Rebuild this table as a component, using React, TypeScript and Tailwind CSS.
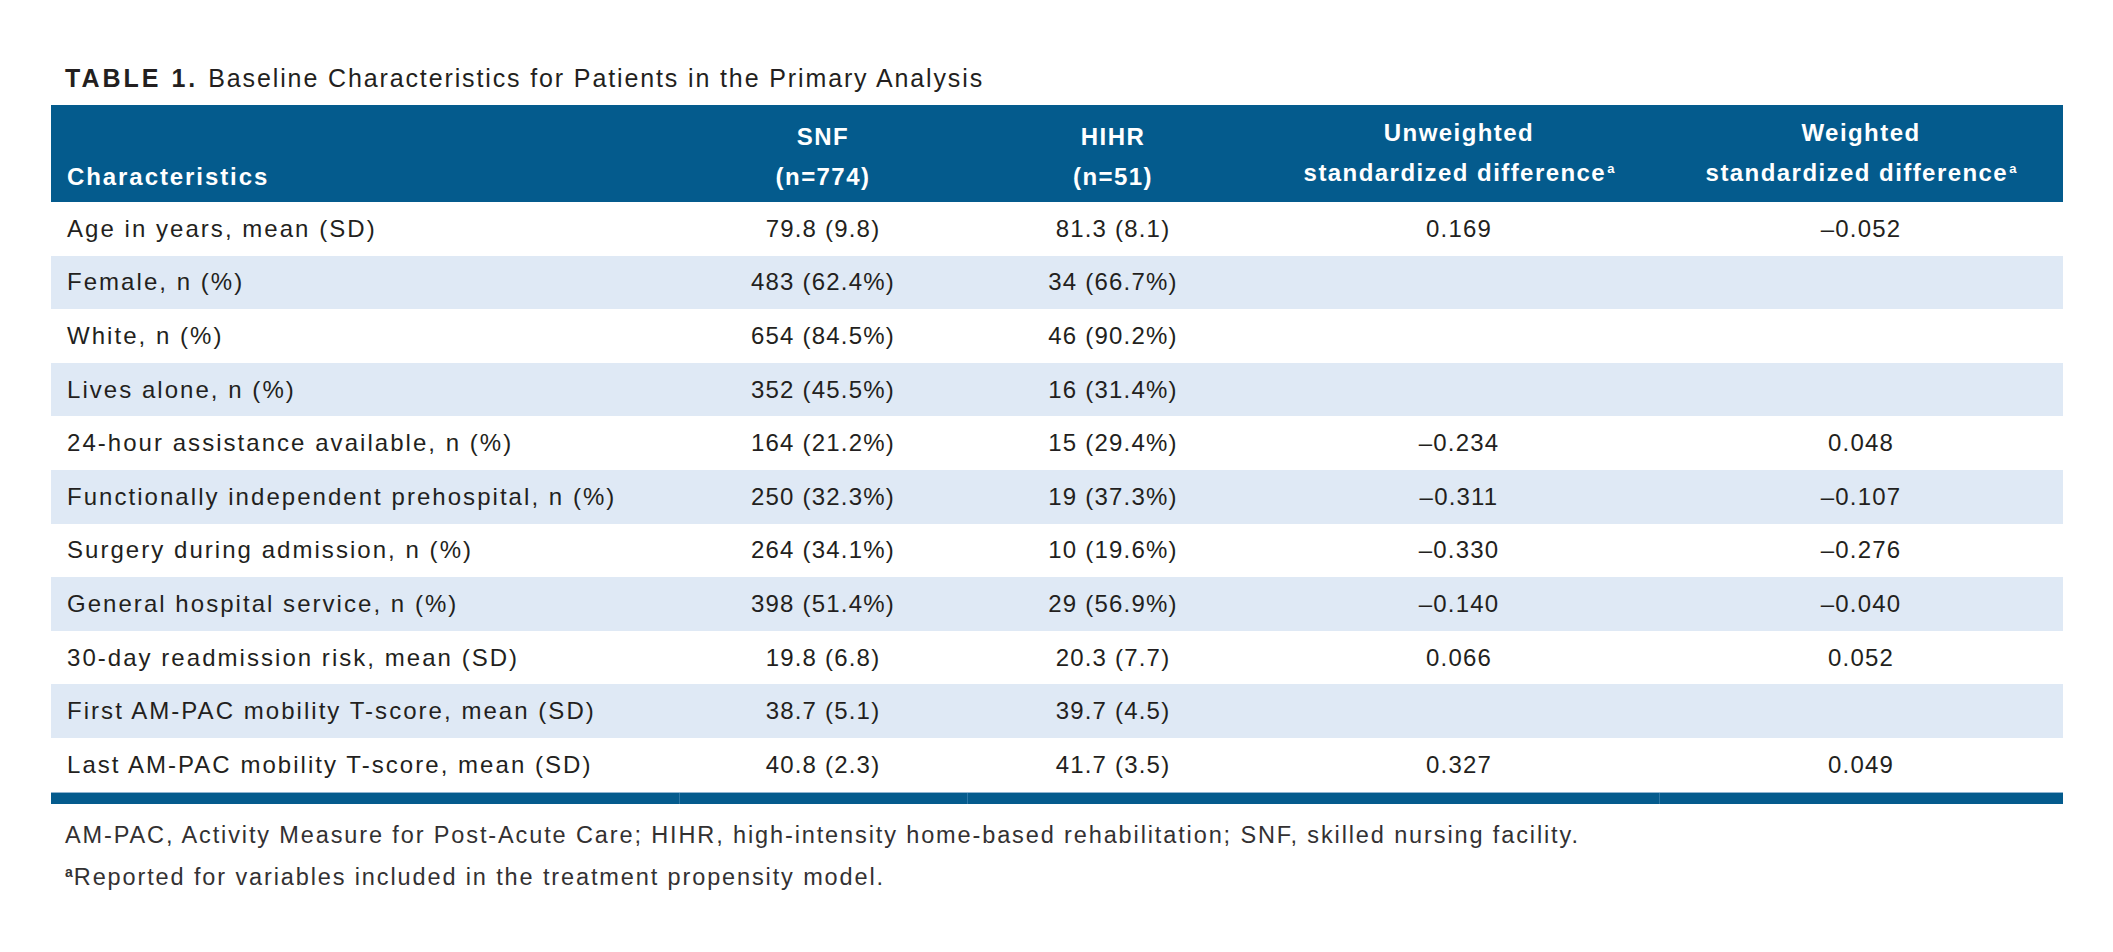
import React from "react";

const rows: [string, string, string, string, string][] = [
  ["Age in years, mean (SD)", "79.8 (9.8)", "81.3 (8.1)", "0.169", "–0.052"],
  ["Female, n (%)", "483 (62.4%)", "34 (66.7%)", "", ""],
  ["White, n (%)", "654 (84.5%)", "46 (90.2%)", "", ""],
  ["Lives alone, n (%)", "352 (45.5%)", "16 (31.4%)", "", ""],
  ["24-hour assistance available, n (%)", "164 (21.2%)", "15 (29.4%)", "–0.234", "0.048"],
  ["Functionally independent prehospital, n (%)", "250 (32.3%)", "19 (37.3%)", "–0.311", "–0.107"],
  ["Surgery during admission, n (%)", "264 (34.1%)", "10 (19.6%)", "–0.330", "–0.276"],
  ["General hospital service, n (%)", "398 (51.4%)", "29 (56.9%)", "–0.140", "–0.040"],
  ["30-day readmission risk, mean (SD)", "19.8 (6.8)", "20.3 (7.7)", "0.066", "0.052"],
  ["First AM-PAC mobility T-score, mean (SD)", "38.7 (5.1)", "39.7 (4.5)", "", ""],
  ["Last AM-PAC mobility T-score, mean (SD)", "40.8 (2.3)", "41.7 (3.5)", "0.327", "0.049"],
];

const cols = "grid grid-cols-[628px_288px_292px_400px_404px]";

function Sup() {
  return <span className="relative -top-[8px] ml-[1px] text-[13px] font-bold tracking-normal">a</span>;
}

export default function App() {
  return (
    <div className="h-[952px] w-[2113px] bg-white font-['Liberation_Sans',Arial,sans-serif] text-[#231f20]">
      <div className="pl-[51px]">
        {/* Title */}
        <div className="flex h-[105px] items-end pb-[12px] pl-[14px] text-[25px] leading-[30px] tracking-[0.075em]">
          <span className="mr-[10px] font-bold tracking-[0.12em]">TABLE 1.</span>
          <span>Baseline Characteristics for Patients in the Primary Analysis</span>
        </div>

        <div className="w-[2012px]">
          {/* Header */}
          <div className={`${cols} h-[97px] bg-[#045b8d] text-[24px] font-bold leading-[40px] tracking-[0.06em] text-white`}>
            <div className="flex items-end pb-[5px] pl-[16px] tracking-[0.08em]">Characteristics</div>
            <div className="flex flex-col items-center justify-end pb-[5px]">
              <span>SNF</span>
              <span>(n=774)</span>
            </div>
            <div className="flex flex-col items-center justify-end pb-[5px]">
              <span>HIHR</span>
              <span>(n=51)</span>
            </div>
            <div className="flex flex-col items-center justify-end pb-[5px]">
              <span>Unweighted</span>
              <span>
                standardized difference
                <Sup />
              </span>
            </div>
            <div className="flex flex-col items-center justify-end pb-[5px]">
              <span>Weighted</span>
              <span>
                standardized difference
                <Sup />
              </span>
            </div>
          </div>

          {/* Body */}
          {rows.map((r, i) => (
            <div
              key={r[0]}
              className={`${cols} h-[53.6px] items-center text-[24px] leading-[30px] tracking-[0.05em] ${i % 2 === 1 ? "bg-[#dfe9f5]" : "bg-white"}`}
            >
              <div className="pl-[16px] tracking-[0.085em]">{r[0]}</div>
              <div className="text-center">{r[1]}</div>
              <div className="text-center">{r[2]}</div>
              <div className="text-center">{r[3]}</div>
              <div className="text-center">{r[4]}</div>
            </div>
          ))}

          {/* Bottom rule */}
          <div className="flex h-[12px] border-t border-[#8fb4d0] bg-[#045b8d]">
            <div className="w-[628px]" />
            <div className="w-[288px] border-l border-[#2c77a6]" />
            <div className="w-[692px] border-l border-[#2c77a6]" />
            <div className="w-[404px] border-l border-[#2c77a6]" />
          </div>
        </div>

        {/* Footnotes */}
        <div className="pl-[14px] pt-[10px] text-[23.5px] leading-[42px] tracking-[0.08em] text-[#333132]">
          <p>AM-PAC, Activity Measure for Post-Acute Care; HIHR, high-intensity home-based rehabilitation; SNF, skilled nursing facility.</p>
          <p>
            <span className="relative -top-[8px] mr-[1px] text-[14px] font-bold tracking-normal">a</span>
            Reported for variables included in the treatment propensity model.
          </p>
        </div>
      </div>
    </div>
  );
}
